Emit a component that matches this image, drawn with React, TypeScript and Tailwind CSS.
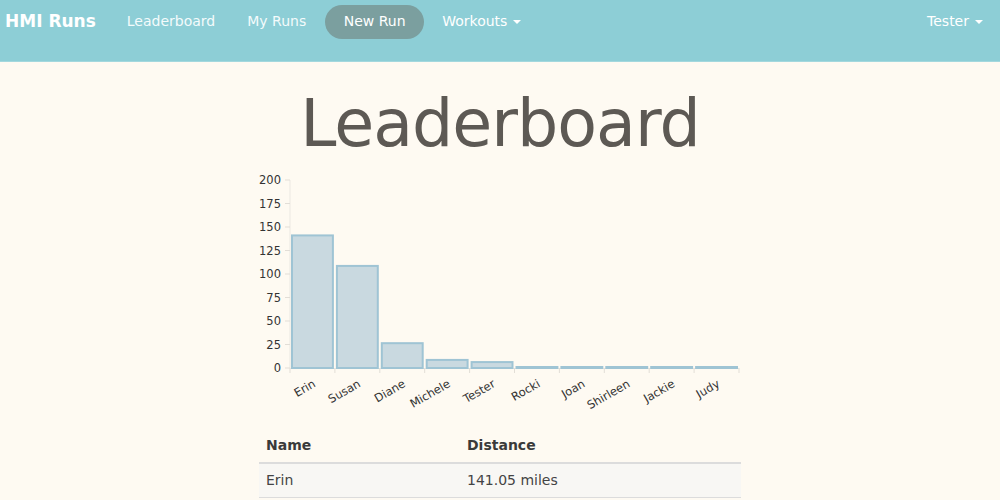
type Runner = { name: string; miles: number };

const runners: Runner[] = [
  { name: "Erin", miles: 141.05 },
  { name: "Susan", miles: 108.6 },
  { name: "Diane", miles: 26.4 },
  { name: "Michele", miles: 8.6 },
  { name: "Tester", miles: 6.3 },
  { name: "Rocki", miles: 0.3 },
  { name: "Joan", miles: 0.3 },
  { name: "Shirleen", miles: 0.3 },
  { name: "Jackie", miles: 0.3 },
  { name: "Judy", miles: 0.3 },
];

const font = { fontFamily: '"DejaVu Sans", sans-serif' };

const Caret = () => (
  <span className="ml-1.5 inline-block h-0 w-0 border-x-[4px] border-t-[4px] border-x-transparent border-t-white align-middle" />
);

const Chart = () => {
  const x0 = 40;
  const y0 = 198;
  const scale = 0.94;
  const band = 44.9;
  const ticks = [0, 25, 50, 75, 100, 125, 150, 175, 200];

  return (
    <svg width="500" height="245" className="block" style={font}>
      <line x1={x0} y1={y0 - 200 * scale} x2={x0} y2={y0} stroke="#ebe8e2" strokeWidth="1" />
      {ticks.map((t) => (
        <g key={t}>
          <line x1={x0 - 5} x2={x0} y1={y0 - t * scale} y2={y0 - t * scale} stroke="#e2ded7" />
          <text x={x0 - 9} y={y0 - t * scale + 4} textAnchor="end" fontSize="11.5" fill="#333">
            {t}
          </text>
        </g>
      ))}
      <line x1={x0} y1={y0 + 0.5} x2={x0 + band * 10} y2={y0 + 0.5} stroke="#ebe8e2" />
      {runners.map((r, i) => {
        const left = x0 + i * band;
        const h = Math.max(r.miles * scale, 1);
        const lx = left + band / 2 + 4;
        const ly = y0 + 18;
        return (
          <g key={r.name}>
            <rect
              x={left + 2}
              y={y0 - h}
              width={band - 4}
              height={h}
              fill="#c9d9e0"
              stroke="#9fc4d4"
              strokeWidth="2"
            />
            <line x1={left} x2={left} y1={y0} y2={y0 + 5} stroke="#e2ded7" />
            <text
              x={lx}
              y={ly}
              textAnchor="end"
              fontSize="11.5"
              fill="#333"
              transform={`rotate(-30 ${lx} ${ly})`}
            >
              {r.name}
            </text>
          </g>
        );
      })}
      <line x1={x0 + band * 10} x2={x0 + band * 10} y1={y0} y2={y0 + 5} stroke="#e2ded7" />
    </svg>
  );
};

const App = () => {
  return (
    <div className="min-h-[500px] bg-[#fefaf2]" style={font}>
      <nav className="flex h-[62px] items-start border-b border-[#a3d8de] bg-[#8dced6] text-[14px]">
        <div className="flex h-[43px] w-full items-center pl-[5px] pr-[17px]">
          <span className="mr-[31px] text-[17px] font-bold text-white">HMI Runs</span>
          <a className="mr-[32px] text-[#f4fbfc]">Leaderboard</a>
          <a className="mr-[19px] text-[#f4fbfc]">My Runs</a>
          <a className="mr-[18px] flex h-[34px] w-[99px] items-center justify-center rounded-full bg-[#7b9f9f] text-white">
            New Run
          </a>
          <a className="flex items-center text-white">
            Workouts
            <Caret />
          </a>
          <a className="ml-auto flex items-center text-white">
            Tester
            <Caret />
          </a>
        </div>
      </nav>

      <h1 className="pt-[22px] text-center text-[65px] leading-[80px] tracking-[-1px] text-[#5d5954]">
        Leaderboard
      </h1>

      <div className="mx-auto mt-[6px] w-[500px]">
        <Chart />
      </div>

      <div className="mx-auto mt-[20px] w-[482px] text-[14px] text-[#333]">
        <div className="flex border-b-2 border-[#dcdcdc] px-[7px] pb-[6px] font-bold text-[#3a3a3a]">
          <span className="w-[201px]">Name</span>
          <span>Distance</span>
        </div>
        <div className="flex border-b border-[#dcdcdc] bg-[#f8f7f4] px-[7px] py-[6px] text-[#444]">
          <span className="w-[201px]">Erin</span>
          <span>141.05 miles</span>
        </div>
      </div>
    </div>
  );
};

export default App;
